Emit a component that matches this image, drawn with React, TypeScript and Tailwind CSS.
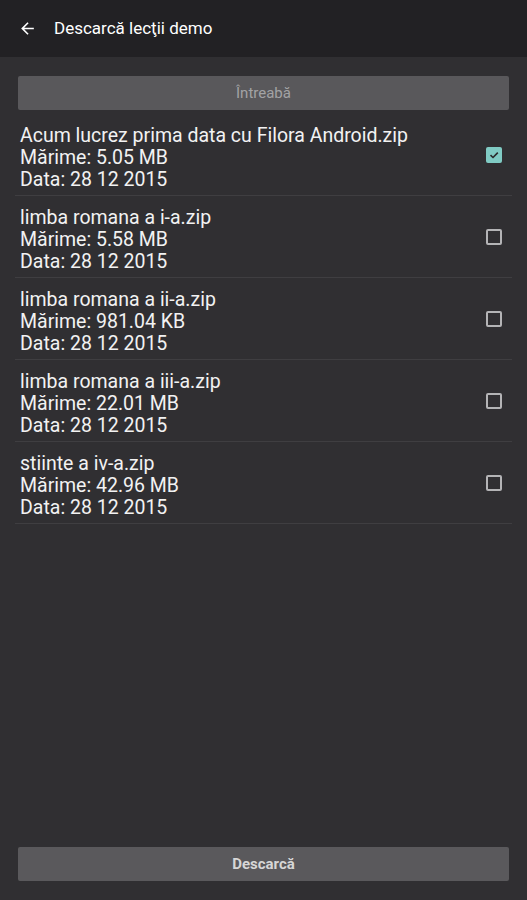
import React from "react";

const items = [
  { name: "Acum lucrez prima data cu Filora Android.zip", size: "5.05 MB", checked: true },
  { name: "limba romana a i-a.zip", size: "5.58 MB", checked: false },
  { name: "limba romana a ii-a.zip", size: "981.04 KB", checked: false },
  { name: "limba romana a iii-a.zip", size: "22.01 MB", checked: false },
  { name: "stiinte a iv-a.zip", size: "42.96 MB", checked: false },
];

function Checkbox({ checked }: { checked: boolean }) {
  if (checked) {
    return (
      <div className="w-[16px] h-[16px] mb-[6px] rounded-[2px] bg-[#80cbc4] flex items-center justify-center">
        <svg width="12" height="12" viewBox="0 0 12 12">
          <path d="M2.5 6.2 L5 8.5 L9.8 3.6" fill="none" stroke="#2a2a2c" strokeWidth="1.6" />
        </svg>
      </div>
    );
  }
  return <div className="w-[16px] h-[16px] mb-[6px] rounded-[2px] border-2 border-[#b4b4b6]" />;
}

export default function App() {
  return (
    <div
      className="w-[527px] h-[900px] bg-[#302f32] flex flex-col"
      style={{ fontFamily: "Roboto, 'Noto Sans', sans-serif" }}
    >
      <div className="h-[57px] bg-[#222124] flex items-center shrink-0">
        <svg className="ml-[18px]" width="19" height="19" viewBox="0 0 24 24">
          <path d="M20 11H7.83l5.59-5.59L12 4l-8 8 8 8 1.41-1.41L7.83 13H20v-2z" fill="#ffffff" />
        </svg>
        <span className="ml-[17px] text-[17px] text-white">Descarcă lecţii demo</span>
      </div>
      <div className="flex-1 flex flex-col px-[18px] pt-[19px] pb-[19px]">
        <div className="h-[34px] bg-[#59585b] rounded-[2px] flex items-center justify-center text-[15px] text-[#a3a3a5]">
          Întreabă
        </div>
        <div className="mt-[4px] -mx-[3px] flex flex-col">
          {items.map((it) => (
            <div
              key={it.name}
              className="flex items-center border-b border-[#3f3e41] pl-[5px] pr-[10px] pt-[11px] pb-[4px]"
            >
              <div className="flex-1 flex flex-col text-[19.5px] leading-[22px] text-[#f2f2f2]">
                <span>{it.name}</span>
                <span>Mărime: {it.size}</span>
                <span>Data: 28 12 2015</span>
              </div>
              <Checkbox checked={it.checked} />
            </div>
          ))}
        </div>
        <div className="flex-1" />
        <div className="h-[34px] bg-[#5a595c] rounded-[2px] flex items-center justify-center text-[15px] font-bold text-[#d6d6d6]">
          Descarcă
        </div>
      </div>
    </div>
  );
}
